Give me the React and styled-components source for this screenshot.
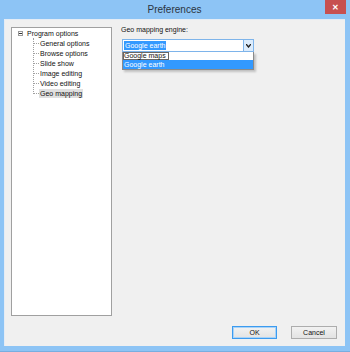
import styled, { createGlobalStyle } from 'styled-components';

const Global = createGlobalStyle`
  html, body { margin: 0; padding: 0; background: #8cc3f4; }
  body { font-family: "Liberation Sans", Arial, sans-serif; }
`;

const Window = styled.div`
  width: 350px;
  height: 352px;
  box-sizing: border-box;
  display: flex;
  flex-direction: column;
  background: #8dc4f5;
  border-bottom: 1px solid #78aee0;
  padding: 0 5px 5px 4px;
`;

const TitleBar = styled.div`
  height: 19px;
  flex: none;
  display: flex;
  align-items: center;
  justify-content: center;
  position: relative;
  font-size: 10px;
  color: #2b3440;
`;

const CloseButton = styled.div`
  position: absolute;
  right: -1px;
  top: 0;
  width: 21px;
  height: 14px;
  background: #c75050;
  color: #fff;
  font-size: 8px;
  font-weight: bold;
  display: flex;
  align-items: center;
  justify-content: center;
`;

const Client = styled.div`
  flex: 1;
  background: #f0f0f0;
  border: 1px solid #e4ecf5;
  border-width: 1px 0 0 1px;
  display: flex;
  flex-direction: column;
  padding: 7px 8px 7px 6px;
  font-size: 7px;
  color: #111;
`;

const Content = styled.div`
  flex: 1;
  display: flex;
  gap: 9px;
`;

const TreeBox = styled.div`
  width: 101px;
  box-sizing: border-box;
  background: #fff;
  border: 1px solid #a0a0a0;
  padding: 0 0 0 6px;
`;

const TreeRoot = styled.div`
  display: flex;
  align-items: center;
  height: 10px;
  gap: 4px;
`;

const Expander = styled.div`
  width: 5px;
  height: 5px;
  box-sizing: border-box;
  border: 1px solid #9a9a9a;
  position: relative;
  &::after {
    content: '';
    position: absolute;
    left: 0;
    top: 1px;
    width: 3px;
    height: 1px;
    background: #333;
  }
`;

const TreeChildren = styled.div`
  margin-left: 15px;
  border-left: 1px dotted #a0a0a0;
  height: 56px;
`;

const TreeItem = styled.div`
  display: flex;
  align-items: center;
  height: 10px;
  &::before {
    content: '';
    width: 5px;
    border-top: 1px dotted #a0a0a0;
  }
`;

const ItemLabel = styled.span`
  padding: 0 1px;
  background: ${p => (p.$selected ? '#e0e0e0' : 'transparent')};
  line-height: 9px;
`;

const Panel = styled.div`
  flex: 1;
  display: flex;
  flex-direction: column;
  gap: 5px;
`;

const Label = styled.div`
  height: 8px;
  line-height: 8px;
  margin-top: -1px;
`;

const ComboWrap = styled.div`
  position: relative;
  width: 132px;
  margin-left: 1px;
`;

const Combo = styled.div`
  height: 13px;
  box-sizing: border-box;
  border: 1px solid #7eb4ea;
  background: #fff;
  display: flex;
  align-items: center;
  padding-left: 1px;
`;

const ComboText = styled.span`
  flex: 1;
  display: flex;
`;

const Highlight = styled.span`
  background: #3399ff;
  color: #fff;
  padding: 1px 1px;
  line-height: 7px;
`;

const ComboArrow = styled.div`
  width: 9px;
  height: 11px;
  background: #dcecfc;
  border-left: 1px solid #7eb4ea;
  display: flex;
  align-items: center;
  justify-content: center;
`;

const DropList = styled.div`
  position: absolute;
  left: 0;
  right: 0;
  top: 13px;
  background: #fff;
  border: 1px solid #8a8a8a;
  border-top: none;
  box-shadow: 2px 2px 2px rgba(0, 0, 0, 0.2);
`;

const Option = styled.div`
  height: ${p => (p.$active ? 9 : 8)}px;
  line-height: ${p => (p.$active ? 9 : 8)}px;
  padding: 0 3px 0 1px;
  white-space: nowrap;
  box-sizing: border-box;
  background: ${p => (p.$active ? '#3399ff' : '#fff')};
  color: ${p => (p.$active ? '#fff' : '#111')};
  box-shadow: ${p => (p.$focus ? 'inset 0 0 0 1px #666' : 'none')};
  width: ${p => (p.$focus ? 'fit-content' : 'auto')};
`;

const Footer = styled.div`
  display: flex;
  justify-content: flex-end;
  gap: 14px;
  margin-top: 10px;
`;

const Button = styled.button`
  width: ${p => p.$w}px;
  height: 13px;
  box-sizing: border-box;
  padding: 0;
  font: inherit;
  font-size: 7px;
  color: #111;
  background: linear-gradient(#f2f2f2, #e3e3e3);
  border: 1px solid ${p => (p.$default ? '#3c9bef' : '#adadad')};
  box-shadow: ${p => (p.$default ? 'inset 0 0 0 1px #a9d3f8' : 'none')};
`;

export default function App() {
  const children = ['General options', 'Browse options', 'Slide show', 'Image editing', 'Video editing', 'Geo mapping'];
  return (
    <>
      <Global />
      <Window>
        <TitleBar>
          Preferences
          <CloseButton>✕</CloseButton>
        </TitleBar>
        <Client>
          <Content>
            <TreeBox>
              <TreeRoot>
                <Expander />
                <span>Program options</span>
              </TreeRoot>
              <TreeChildren>
                {children.map(c => (
                  <TreeItem key={c}>
                    <ItemLabel $selected={c === 'Geo mapping'}>{c}</ItemLabel>
                  </TreeItem>
                ))}
              </TreeChildren>
            </TreeBox>
            <Panel>
              <Label>Geo mapping engine:</Label>
              <ComboWrap>
                <Combo>
                  <ComboText>
                    <Highlight>Google earth</Highlight>
                  </ComboText>
                  <ComboArrow>
                    <svg width="5" height="4" viewBox="0 0 5 4">
                      <path d="M0 0 L2.5 3 L5 0" fill="none" stroke="#222" strokeWidth="1.4" />
                    </svg>
                  </ComboArrow>
                </Combo>
                <DropList>
                  <Option $focus>Google maps</Option>
                  <Option $active>Google earth</Option>
                </DropList>
              </ComboWrap>
            </Panel>
          </Content>
          <Footer>
            <Button $w={45} $default>OK</Button>
            <Button $w={46}>Cancel</Button>
          </Footer>
        </Client>
      </Window>
    </>
  );
}
